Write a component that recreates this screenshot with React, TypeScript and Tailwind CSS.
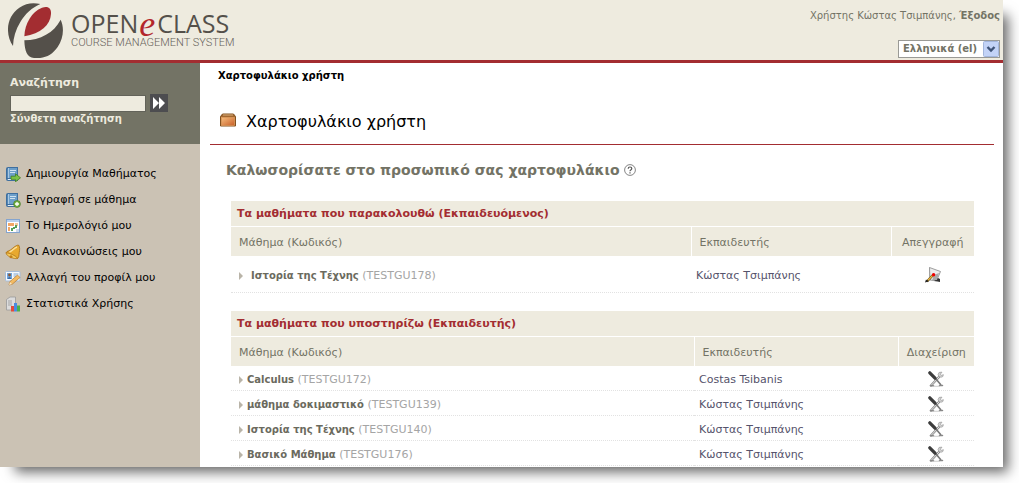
import type { ReactNode } from "react";

type Course = { name: string; code: string; teacher: string };

const followed: Course[] = [
  { name: "Ιστορία της Τέχνης", code: "TESTGU178", teacher: "Κώστας Τσιμπάνης" },
];

const supported: Course[] = [
  { name: "Calculus", code: "TESTGU172", teacher: "Costas Tsibanis" },
  { name: "μάθημα δοκιμαστικό", code: "TESTGU139", teacher: "Κώστας Τσιμπάνης" },
  { name: "Ιστορία της Τέχνης", code: "TESTGU140", teacher: "Κώστας Τσιμπάνης" },
  { name: "Βασικό Μάθημα", code: "TESTGU176", teacher: "Κώστας Τσιμπάνης" },
];

function Emblem() {
  return (
    <svg viewBox="0 0 165 165" className="h-[55px] w-[55px] shrink-0" aria-hidden="true">
      <path
        d="M15 129C-10 92 -4 40 34 14C54 0 76 -2 97 3C72 14 52 32 37 57C23 80 16 104 15 129Z"
        fill="#54504a"
      />
      <path
        d="M49 100C50 62 72 25 102 14C120 8 130 15 129 33C127 66 98 92 49 100Z"
        fill="#a32d31"
      />
      <path
        d="M49 112C97 111 138 89 158 50C169 73 167 107 149 132C132 157 108 168 78 165C57 163 50 145 49 112Z"
        fill="#54504a"
      />
    </svg>
  );
}

function Book({ children }: { children: ReactNode }) {
  return (
    <svg viewBox="0 0 16 16" className="h-4 w-4 shrink-0" aria-hidden="true">
      <path d="M3 1h10v14H3q-2 0-2-2V3q0-2 2-2z" fill="#3f6f9f" />
      <path d="M3.500 2h8.500v10H2.500V3z" fill="#6d9fca" />
      <path d="M2.500 13h9.500v1H3z" fill="#e4eef7" />
      <path d="M3.500 2v10" stroke="#a9c8e2" />
      <path d="M5 4.500h6M5 6.500h5" stroke="#cfe2f1" />
      {children}
    </svg>
  );
}

function CreateIcon() {
  return (
    <Book>
      <path d="M6 10.200h4.500v-2.400l5 4-5 4v-2.400h-4.500z" fill="#7cc146" stroke="#3f7f20" strokeWidth=".8" />
    </Book>
  );
}

function EnrolIcon() {
  return (
    <Book>
      <circle cx="12" cy="12" r="3.400" fill="#76b443" stroke="#467a2a" strokeWidth=".7" />
      <path d="M12 10v4M10 12h4" stroke="#fff" strokeWidth="1.300" />
    </Book>
  );
}

function CalendarIcon() {
  return (
    <svg viewBox="0 0 16 16" className="h-4 w-4 shrink-0" aria-hidden="true">
      <rect x="1.500" y="1.500" width="13" height="13" fill="#fff" stroke="#84a4cf" />
      <path d="M2 2h12v2H2z" fill="#b9d0ee" />
      <path d="M3 5h6v3H3z" fill="#f2a765" />
      <path d="M10 5h3v3h-3z" fill="#f3c9a0" />
      <path d="M3 9h2v4H3z" fill="#f2a765" />
      <path d="M6 10h2v3H6zM8 9h2v2H8zM10 7h2v3h-2z" fill="#55a05a" />
      <path d="M11 11h3v3h-3z" fill="#cdd8e8" />
    </svg>
  );
}

function BellIcon() {
  return (
    <svg viewBox="0 0 16 16" className="h-4 w-4 shrink-0" aria-hidden="true">
      <path
        d="M12.500 1.200q1.700-.4 1.800 1.200c.9 3-.2 5.600-.3 8.300q0 2.300-1.300 3.700L1 8.800q.6-1.500 2.800-2C6.700 6 8.500 2.500 12.500 1.200z"
        fill="#e8a92f"
        stroke="#a86d14"
        strokeWidth=".8"
      />
      <path d="M4.500 8C7.500 7 9 4 12 3" stroke="#fbe09a" strokeWidth="1.400" fill="none" />
      <path d="M1 8.800c3.500 0 9.700 2.700 11.700 5.600C9 15.600 1 12 1 8.800z" fill="#f5c95a" stroke="#a86d14" strokeWidth=".7" />
      <circle cx="6" cy="12.800" r="1.500" fill="#c17d18" />
    </svg>
  );
}

function ProfileIcon() {
  return (
    <svg viewBox="0 0 16 16" className="h-4 w-4 shrink-0" aria-hidden="true">
      <rect x=".5" y="1.500" width="14.500" height="9.500" rx="1" fill="#f5f9fe" stroke="#a5bcd9" />
      <path d="M2 3h5v6H2z" fill="#72a5dc" />
      <circle cx="4.500" cy="5" r="1.400" fill="#8d5a35" />
      <path d="M2.500 9q2-4 4 0z" fill="#3b6ea8" />
      <path d="M8.500 4h5M8.500 6h3" stroke="#7da4d0" />
      <path d="M4 15l1-3.500 7.500-6.500 2.500 2.500-7.500 6.500z" fill="#f3bb63" stroke="#b37a32" strokeWidth=".7" />
      <path d="M4 15l1-3 2 2z" fill="#f8e6c7" />
    </svg>
  );
}

function StatsIcon() {
  return (
    <svg viewBox="0 0 16 16" className="h-4 w-4 shrink-0" aria-hidden="true">
      <path d="M1.500 3.500L5 1h5.500v11L7 14H1.500z" fill="#dcdcdc" stroke="#999" strokeWidth=".8" />
      <path d="M3 5h4M3 7h4M3 9h4" stroke="#a5a5a5" />
      <path d="M6 10h3v5.500H6z" fill="#e34a3a" />
      <path d="M9 7h3v8.500H9z" fill="#4a8be0" />
      <path d="M12 9.500h3v6h-3z" fill="#48b04b" />
    </svg>
  );
}

function BriefcaseIcon() {
  return (
    <svg viewBox="0 0 16 14" className="h-[14px] w-4 shrink-0" aria-hidden="true">
      <defs>
        <linearGradient id="case" x1="0" y1="0" x2="1" y2="1">
          <stop offset="0" stopColor="#f6bd7d" />
          <stop offset="1" stopColor="#c8602a" />
        </linearGradient>
      </defs>
      <path d="M2.500 1h11l2 2.500v9.500H.5V3.500z" fill="#a2672f" stroke="#81501f" />
      <path d="M3 2h10" stroke="#d9b07c" />
      <rect x="1.500" y="4.500" width="13" height="8" fill="url(#case)" stroke="#e3a265" strokeWidth=".6" />
    </svg>
  );
}

function HelpIcon() {
  return (
    <svg viewBox="0 0 12 12" className="h-3 w-3" aria-hidden="true">
      <circle cx="6" cy="6" r="5.400" fill="#fff" stroke="#666" strokeWidth=".8" />
      <path d="M4.200 4.700q0-1.700 1.800-1.700t1.800 1.500q0 .8-1 1.400-.8.500-.8 1.300" fill="none" stroke="#555" strokeWidth="1.200" />
      <path d="M5.400 8.200h1.200v1.200H5.400z" fill="#555" />
    </svg>
  );
}

function UnregisterIcon() {
  return (
    <svg viewBox="0 0 16 16" className="h-4 w-4" aria-hidden="true">
      <path d="M4.500.5l11 4-4 9.500-6.500-1z" fill="#ececec" stroke="#888" strokeWidth=".8" />
      <path d="M13 11l2 1v3l-5-1-1-1z" fill="#333" />
      <path d="M9 8l5-2-2 7-5 .5z" fill="#aaa" />
      <path d="M4.500.5v9" stroke="#999" strokeWidth=".7" />
      <path d="M2 14.500L8 8" stroke="#4a3a10" strokeWidth="2.400" />
      <path d="M3 13.200L8 8" stroke="#f0b942" strokeWidth="1.400" />
      <path d="M0 15.500l1-3 2.200 2z" fill="#222" />
      <circle cx="8.600" cy="7.800" r="1.700" fill="#e00" />
    </svg>
  );
}

function ToolsIcon() {
  return (
    <svg viewBox="0 0 16 16" className="h-4 w-4" aria-hidden="true">
      <path d="M3 14.500L11 6" stroke="#8b8b8b" strokeWidth="2.400" strokeLinecap="round" />
      <path d="M3 14.500L11 6" stroke="#e3e3e3" strokeWidth="1" strokeLinecap="round" />
      <path d="M14 1.200q-3.600-.8-3.900 2.300.1 2.800 3 2.700 2.200 0 2.300-2.500l-2.300.7-.8-1.200z" fill="#d5d5d5" stroke="#999" strokeWidth=".7" />
      <path d="M8 8l5 6" stroke="#777" strokeWidth="1.600" />
      <path d="M2.500 14.800h3M11.500 14.500h3" stroke="#888" strokeWidth="1.500" strokeLinecap="round" />
      <path d="M5 15.300h7" stroke="#c4c4c4" strokeWidth=".8" />
      <path d="M1.800 1.800L7 7.200" stroke="#3c3c3c" strokeWidth="3.200" strokeLinecap="round" />
    </svg>
  );
}

const menu: { label: string; icon: ReactNode }[] = [
  { label: "Δημιουργία Μαθήματος", icon: <CreateIcon /> },
  { label: "Εγγραφή σε μάθημα", icon: <EnrolIcon /> },
  { label: "Το Ημερολόγιό μου", icon: <CalendarIcon /> },
  { label: "Οι Ανακοινώσεις μου", icon: <BellIcon /> },
  { label: "Αλλαγή του προφίλ μου", icon: <ProfileIcon /> },
  { label: "Στατιστικά Χρήσης", icon: <StatsIcon /> },
];

function CourseTable(props: {
  title: string;
  action: string;
  courses: Course[];
  icon: ReactNode;
  teacherCol: string;
  actionCol: string;
  rowHeight: string;
  nameGap: string;
}) {
  return (
    <table className="w-full table-fixed border-collapse text-left text-[11px] leading-4">
      <caption className="h-[25px] bg-[#eeebdf] pl-1.5 pt-[5px] text-left font-bold text-[#a32d31]">
        {props.title}
      </caption>
      <colgroup>
        <col />
        <col className={props.teacherCol} />
        <col className={props.actionCol} />
      </colgroup>
      <thead>
        <tr className="h-[29px] border-t border-white bg-[#eeebdf] text-[#737365]">
          <th className="pl-2 pt-1 font-normal">Μάθημα (Κωδικός)</th>
          <th className="border-l border-white pl-2 pt-1 font-normal">Εκπαιδευτής</th>
          <th className="border-l border-white pt-1 text-center font-normal">{props.action}</th>
        </tr>
      </thead>
      <tbody>
        {props.courses.map((c) => (
          <tr key={c.code} className={`${props.rowHeight} border-b border-dotted border-[#e2e2e2]`}>
            <td className="pl-2 pt-1">
              <div className={`flex items-center ${props.nameGap}`}>
                <svg viewBox="0 0 4 8" className="h-2 w-1 shrink-0" aria-hidden="true">
                  <path d="M0 0l4 4-4 4z" fill="#b9b4a8" />
                </svg>
                <span className="whitespace-nowrap text-[#a5a5a5]">
                  <a href="#course" className="text-[10px] font-bold text-[#6b6a5e]">
                    {c.name}
                  </a>{" "}
                  ({c.code})
                </span>
              </div>
            </td>
            <td className="pl-[5px] pt-1 text-[#55536b]">{c.teacher}</td>
            <td className="pt-0.5">
              <a href="#action" aria-label={props.action} className="flex justify-center">
                {props.icon}
              </a>
            </td>
          </tr>
        ))}
      </tbody>
    </table>
  );
}

export default function App() {
  return (
    <div className="overflow-hidden bg-white pb-4 pr-4 font-['DejaVu_Sans',sans-serif]">
      <div className="bg-white shadow-[10px_10px_12px_-5px_rgba(0,0,0,0.6)]">
        <header className="flex h-[63px] justify-between border-b-[3px] border-[#a32d31] bg-[#eeebdf]">
          <div className="flex gap-2 pl-2 pt-[3px]">
            <Emblem />
            <div className="pt-1.5 text-[#54504a]">
              <div className="flex h-7 items-center font-['Open_Sans',sans-serif] text-[25px] leading-7">
                <span>OPEN</span>
                <span className="pl-px pr-0.5 pt-0.5 font-['Liberation_Serif',serif] text-[36px] italic leading-7 text-[#b3262b]">
                  e
                </span>
                <span>CLASS</span>
              </div>
              <div className="font-['Roboto',sans-serif] text-[11px] font-light leading-3 text-[#66625a]">
                COURSE MANAGEMENT SYSTEM
              </div>
            </div>
          </div>
          <div className="flex flex-col items-end justify-between pb-0.5 pr-[3px] pt-2 text-[10px] text-[#737365]">
            <p className="leading-4">
              Χρήστης Κώστας Τσιμπάνης,{" "}
              <a href="#logout" className="font-bold">
                Έξοδος
              </a>
            </p>
            <div className="relative">
              <select
                aria-label="Γλώσσα"
                className="block h-[18px] w-[102px] appearance-none border border-[#9a9a96] bg-white pl-1 text-[10px] font-bold leading-4 text-[#737365]"
              >
                <option>Ελληνικά (el)</option>
              </select>
              <svg
                viewBox="0 0 16 16"
                className="pointer-events-none absolute right-px top-px h-4 w-4"
                aria-hidden="true"
              >
                <rect x=".5" y=".5" width="15" height="15" rx="1" fill="#c3d3f7" stroke="#a3b6dc" />
                <path d="M4.500 6L8 9.500 11.500 6" fill="none" stroke="#3f5478" strokeWidth="2.400" />
              </svg>
            </div>
          </div>
        </header>

        <div className="flex">
          <aside className="w-[200px] shrink-0 bg-[#cbc2b4]">
            <form className="h-[81px] bg-[#737365] pl-2.5 pt-3 text-[#eeebdf]">
              <label htmlFor="search" className="block text-[11px] font-bold leading-4">
                Αναζήτηση
              </label>
              <div className="mt-[3px] flex gap-1">
                <input
                  id="search"
                  type="text"
                  className="mt-px h-[17px] w-[136px] border border-[#63635a] bg-[#eeebdf] px-1 text-[11px] text-[#333]"
                />
                <button type="button" aria-label="Αναζήτηση" className="flex h-[18px] w-[18px] items-center justify-center bg-[#4d4d50]">
                  <svg viewBox="0 0 12 12" className="h-3 w-3" aria-hidden="true">
                    <path d="M0 0l6 6-6 6zM6 0l6 6-6 6z" fill="#fff" />
                  </svg>
                </button>
              </div>
              <a href="#advanced" className="block pt-px text-[10px] font-bold leading-3">
                Σύνθετη αναζήτηση
              </a>
            </form>
            <nav className="flex flex-col pl-[5px] pt-[17px] text-[11px] text-black">
              {menu.map((m) => (
                <a key={m.label} href="#menu" className="flex h-[26px] items-center gap-[5px]">
                  {m.icon}
                  <span>{m.label}</span>
                </a>
              ))}
            </nav>
          </aside>

          <main className="min-w-0 flex-1 pb-px">
            <p className="pl-[18px] pt-1.5 text-[10px] font-bold leading-[14px] text-black">Χαρτοφυλάκιο χρήστη</p>
            <div className="ml-2.5 mr-[9px] mt-6 flex h-[38px] gap-2.5 border-b border-[#a32d31] pl-2.5 pt-1">
              <div className="pt-0.5">
                <BriefcaseIcon />
              </div>
              <h1 className="text-[16px] leading-[22px] text-black">Χαρτοφυλάκιο χρήστη</h1>
            </div>
            <h2 className="flex items-center gap-1 pl-[26px] pt-[15px] text-[14px] font-bold leading-5 text-[#737365]">
              Καλωσορίσατε στο προσωπικό σας χαρτοφυλάκιο
              <a href="#help" aria-label="Βοήθεια">
                <HelpIcon />
              </a>
            </h2>
            <div className="ml-[31px] mr-[29px] mt-[21px] flex flex-col gap-[18px]">
              <CourseTable
                title="Τα μαθήματα που παρακολουθώ (Εκπαιδευόμενος)"
                action="Απεγγραφή"
                courses={followed}
                icon={<UnregisterIcon />}
                teacherCol="w-[200px]"
                actionCol="w-[83px]"
                rowHeight="h-[37px]"
                nameGap="gap-2"
              />
              <CourseTable
                title="Τα μαθήματα που υποστηρίζω (Εκπαιδευτής)"
                action="Διαχείριση"
                courses={supported}
                icon={<ToolsIcon />}
                teacherCol="w-[204px]"
                actionCol="w-[76px]"
                rowHeight="h-[25px]"
                nameGap="gap-1"
              />
            </div>
          </main>
        </div>
      </div>
    </div>
  );
}
